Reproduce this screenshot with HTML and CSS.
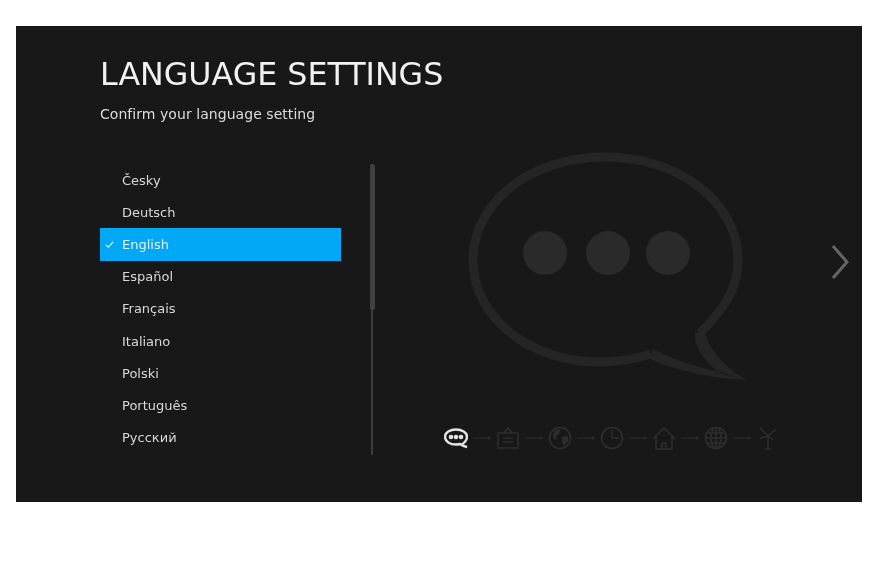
FILE: index.html
```html
<!DOCTYPE html>
<html lang="en">
<head>
<meta charset="utf-8">
<title>Language Settings</title>
<link rel="stylesheet" href="styles.css">
</head>
<body>
<main class="screen">
  <header class="head">
    <h1 class="title">LANGUAGE SETTINGS</h1>
    <p class="subtitle">Confirm your language setting</p>
  </header>
  <div class="content">
    <ul class="langs">
      <li class="lang">Česky</li>
      <li class="lang">Deutsch</li>
      <li class="lang lang-on"><svg class="check" viewBox="0 0 10 10"><path d="M1 5.5 3.8 8 9 2"/></svg>English</li>
      <li class="lang">Español</li>
      <li class="lang">Français</li>
      <li class="lang">Italiano</li>
      <li class="lang">Polski</li>
      <li class="lang">Português</li>
      <li class="lang">Русский</li>
    </ul>
    <div class="scroll"><div class="thumb"></div></div>
    <div class="side">
      <svg class="bubble" viewBox="468 152 280 228">
        <path class="bubble-line" d="M700 333C724 309 738 289 738 260C738 203 680 157 605 157C530 157 473 203 473 260C473 318 530 362 600 362C620 362 635 359 651 354"/>
        <path class="bubble-tail" d="M653 349C675 360 695 367 720 372L747 380C710 378 680 372 650 359ZM695 333C694 346 704 362 720 373L747 380C728 370 708 350 705 331Z"/>
        <circle class="bubble-dot" cx="545" cy="253" r="22"/>
        <circle class="bubble-dot" cx="608" cy="253" r="22"/>
        <circle class="bubble-dot" cx="668" cy="253" r="22"/>
      </svg>
      <div class="steps">
        <svg class="step step-on" viewBox="0 0 24 24"><path d="M18.500 18C21 16 23 14.500 23 11C23 6.500 18 3.500 12 3.500C6 3.500 1 6.500 1 11C1 15.500 6 18.500 12 18.500C14 18.500 15 18.300 16 18C18 19.500 20 20.500 23 21C20.500 20.300 18.500 19.500 18.500 18Z"/><circle class="fill" cx="7" cy="11" r="2.300"/><circle class="fill" cx="12" cy="11" r="2.300"/><circle class="fill" cx="17" cy="11" r="2.300"/></svg>
        <svg class="arrow" viewBox="0 0 18 6"><path d="M0 3H16"/><path class="fill" d="M15 1 18 3 15 5Z"/></svg>
        <svg class="step" viewBox="0 0 24 24"><path d="M2 7H22V22H2ZM8 7 12 2 16 7M7 12H17M7 16H17"/></svg>
        <svg class="arrow" viewBox="0 0 18 6"><path d="M0 3H16"/><path class="fill" d="M15 1 18 3 15 5Z"/></svg>
        <svg class="step" viewBox="0 0 24 24"><circle cx="12" cy="12" r="10.500"/><path class="fill" d="M6 5 12 3 11 8 8 10 9 14 5 12ZM14 11 20 10 20 15 16 20 14 16Z"/></svg>
        <svg class="arrow" viewBox="0 0 18 6"><path d="M0 3H16"/><path class="fill" d="M15 1 18 3 15 5Z"/></svg>
        <svg class="step" viewBox="0 0 24 24"><circle cx="12" cy="12" r="10.500"/><path d="M12 4V12H19"/></svg>
        <svg class="arrow" viewBox="0 0 18 6"><path d="M0 3H16"/><path class="fill" d="M15 1 18 3 15 5Z"/></svg>
        <svg class="step" viewBox="0 0 24 24"><path d="M1 13 12 2 23 13M4 11V23H20V11M10 23V17H14V23"/></svg>
        <svg class="arrow" viewBox="0 0 18 6"><path d="M0 3H16"/><path class="fill" d="M15 1 18 3 15 5Z"/></svg>
        <svg class="step" viewBox="0 0 24 24"><circle cx="12" cy="12" r="10.500"/><ellipse cx="12" cy="12" rx="5" ry="10.500"/><path d="M12 1.500V22.500M1.500 12H22.500M3 7H21M3 17H21"/></svg>
        <svg class="arrow" viewBox="0 0 18 6"><path d="M0 3H16"/><path class="fill" d="M15 1 18 3 15 5Z"/></svg>
        <svg class="step" viewBox="0 0 24 24"><path d="M4 2 12 10 20 3M12 10V23M9 23H15M4 12 12 10 17 14"/></svg>
      </div>
    </div>
  </div>
  <svg class="next" viewBox="0 0 18 36"><path d="M2 2 16 18 2 34"/></svg>
</main>
</body>
</html>
```
FILE: styles.css
```css
* { box-sizing: border-box; }
html, body { margin: 0; background: #fff; }
body { padding: 26px 0 0 16px; font-family: "DejaVu Sans", sans-serif; }
.screen {
  position: relative;
  width: 846px;
  height: 476px;
  padding: 27px 0 0 84px;
  background: #181818;
  color: #e6e6e6;
  filter: blur(0.4px);
}
.head { height: 111px; }
.title { margin: 0; font-size: 31.7px; line-height: 42px; font-weight: 400; color: #f2f2f2; }
.subtitle { margin: 10px 0 0; font-size: 14px; line-height: 18px; color: #dcdcdc; letter-spacing: 0.05px; }
.content { display: flex; align-items: flex-start; }
.langs { list-style: none; margin: 0; padding: 0; width: 241px; }
.lang { display: flex; align-items: center; height: 32.2px; padding-left: 22px; font-size: 13px; color: #d8d8d8; position: relative; }
.lang-on { background: #00a8f5; color: #dff4ff; }
.check { position: absolute; left: 5px; top: 12px; width: 9px; height: 9px; fill: none; stroke: #e8f6ff; stroke-width: 1.2; }
.scroll { width: 6px; height: 291px; margin-left: 28px; display: flex; justify-content: center; background: linear-gradient(#3c3c3c, #3c3c3c) center / 2px 100% no-repeat; }
.thumb { width: 5px; height: 146px; background: #404040; border-radius: 2px; }
.side { position: relative; flex: 1; height: 291px; padding: 0 0 0 69px; display: flex; flex-direction: column; }
.bubble { width: 280px; height: 228px; margin: -12px 0 0 24px; overflow: visible; }
.bubble-line { fill: none; stroke: #252525; stroke-width: 9; }
.bubble-tail { fill: #252525; }
.bubble-dot { fill: #2a2a2a; }
.steps { display: flex; align-items: center; gap: 5px; margin-top: 46px; }
.step { width: 24px; height: 24px; flex: none; fill: none; stroke: #2e2e2e; stroke-width: 1.6; }
.step .fill, .arrow .fill { fill: #2e2e2e; stroke: none; }
.step-on { stroke: #e4e4e4; stroke-width: 2.4; }
.step-on .fill { fill: #e4e4e4; }
.arrow { width: 18px; height: 6px; flex: none; fill: none; stroke: #2c2c2c; stroke-width: 1; }
.next { position: absolute; left: 815px; top: 218px; width: 18px; height: 36px; fill: none; stroke: #666; stroke-width: 3; }
```
